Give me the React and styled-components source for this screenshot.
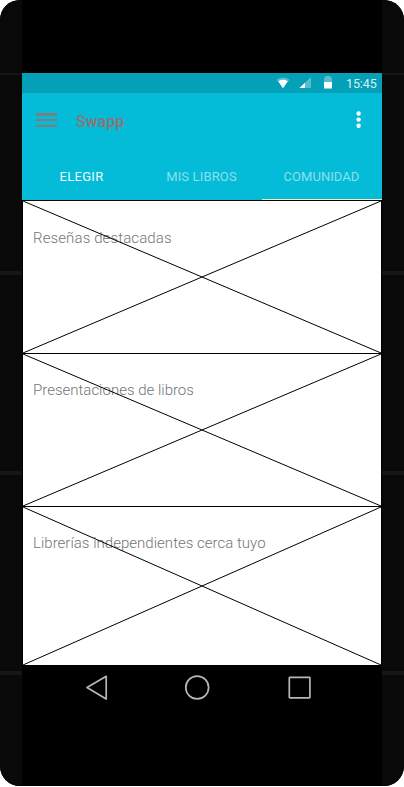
import React from "react";
import styled, { createGlobalStyle } from "styled-components";

const GlobalStyle = createGlobalStyle`
  * { box-sizing: border-box; }
  body { margin: 0; background: #fff; font-family: Roboto, sans-serif; overflow: hidden; }
`;

const Device = styled.div`
  display: grid;
  grid-template-columns: 22px 360px 22px;
  width: 404px;
  height: 786px;
  background: #000;
  border-radius: 20px;
  overflow: hidden;
`;

const Rail = styled.div`
  display: grid;
  grid-template-rows: 73px 2px 196px 4px 196px 4px 196px 4px 1fr;
  background: #090909;
`;

const Seam = styled.div`
  grid-row: ${(p) => p.$row};
  background: #161616;
`;

const Screen = styled.main`
  display: flex;
  flex-direction: column;
  padding-top: 73px;
  min-width: 0;
`;

const StatusBar = styled.div`
  display: flex;
  align-items: center;
  height: 20px;
  padding-left: 255px;
  background: #03a0b7;
`;

const StatusIcons = styled.svg`
  display: block;
  width: 60px;
  height: 20px;
  flex: none;
`;

const Clock = styled.span`
  margin-left: 9px;
  font-size: 12.5px;
  line-height: 20px;
  padding-top: 2px;
  letter-spacing: -0.1px;
  color: #d9f1f5;
`;

const Header = styled.header`
  height: 107px;
  background: #04bcd8;
`;

const Toolbar = styled.div`
  display: flex;
  align-items: center;
  height: 55px;
  padding: 0 20px 0 14px;
`;

const IconButton = styled.button`
  display: block;
  padding: 0;
  border: 0;
  background: none;
  svg { display: block; }
`;

const Title = styled.h1`
  flex: 1;
  margin: 2px 0 0 19px;
  font-size: 16px;
  font-weight: 700;
  line-height: 20px;
  color: #84797b;
`;

const Tabs = styled.nav`
  display: grid;
  grid-template-columns: repeat(3, 120px);
  height: 52px;
`;

const Tab = styled.button`
  padding: 6px 1px 0 0;
  border: 0;
  border-bottom: 1px solid ${(p) => (p.$underlined ? "#e9f5c0" : "transparent")};
  background: none;
  font: 400 13px/20px Roboto, sans-serif;
  letter-spacing: ${(p) => p.$tracking || "0"};
  text-align: center;
  color: ${(p) => (p.$bright ? "#effbfd" : "#8edfeb")};
`;

const Panel = styled.section`
  display: grid;
  height: ${(p) => p.$height}px;
  background: #fff;
  border: 1px solid #000;
  border-bottom: 0;
`;

const Cross = styled.svg`
  grid-area: 1 / 1;
  display: block;
  width: 358px;
  height: 100%;
  overflow: visible;
`;

const PanelTitle = styled.h2`
  grid-area: 1 / 1;
  margin: ${(p) => p.$top}px 0 0 10px;
  font-size: 15px;
  font-weight: 300;
  line-height: 20px;
  letter-spacing: ${(p) => p.$tracking || "0"};
  color: #757575;
`;

const NavBar = styled.footer`
  svg { display: block; }
`;

const SEAM_ROWS = [2, 4, 6, 8];

const PANELS = [
  { title: "Reseñas destacadas", height: 153, top: 27, tracking: "0.12px" },
  { title: "Presentaciones de libros", height: 153, top: 26 },
  { title: "Librerías independientes cerca tuyo", height: 159, top: 26, tracking: "0.02px" },
];

function SideRail() {
  return <Rail>{SEAM_ROWS.map((row) => <Seam key={row} $row={row} />)}</Rail>;
}

function PlaceholderPanel({ title, height, top, tracking }) {
  return (
    <Panel $height={height}>
      <PanelTitle $top={top} $tracking={tracking}>{title}</PanelTitle>
      <Cross viewBox={`0 0 358 ${height - 1}`} preserveAspectRatio="none">
        <path d={`M0 0L358 ${height - 1}M358 0L0 ${height - 1}`} stroke="#000" strokeWidth="1" fill="none" />
      </Cross>
    </Panel>
  );
}

export default function App() {
  return (
    <>
      <GlobalStyle />
      <Device>
        <SideRail />
        <Screen>
          <StatusBar>
            <StatusIcons viewBox="277 73 60 20">
              <path d="M276.6 79.6Q283 75.4 289.4 79.6L283 88.3Z" fill="#55bfce" />
              <path d="M278.3 81.2Q283 78.4 287.7 81.2L283 88.3Z" fill="#fff" />
              <path d="M311 77V88H299.5Z" fill="#55bfce" />
              <path d="M305 82.7V88H299.5Z" fill="#fff" />
              <path d="M324 78.3Q324 77.3 325.2 77.3V76H330.3V77.3Q332 77.3 332 78.3V83H324Z" fill="#55bfce" />
              <path d="M324 82H332V88.4H324Z" fill="#fff" />
            </StatusIcons>
            <Clock>15:45</Clock>
          </StatusBar>
          <Header>
            <Toolbar>
              <IconButton aria-label="Menú">
                <svg width="21" height="15" viewBox="0 0 21 15">
                  <path d="M0 0H21V2.7H0ZM0 6H21V8H0ZM0 12H21V14H0Z" fill="#84797b" />
                </svg>
              </IconButton>
              <Title>Swapp</Title>
              <IconButton aria-label="Más opciones">
                <svg width="6" height="20" viewBox="0 0 6 20">
                  <g fill="#fff">
                    <circle cx="2.6" cy="2.5" r="2.2" />
                    <circle cx="2.6" cy="8.6" r="2.2" />
                    <circle cx="2.6" cy="14.7" r="2.2" />
                  </g>
                </svg>
              </IconButton>
            </Toolbar>
            <Tabs>
              <Tab $bright $tracking="0.3px">ELEGIR</Tab>
              <Tab $tracking="0.15px">MIS LIBROS</Tab>
              <Tab $underlined $tracking="0.06px">COMUNIDAD</Tab>
            </Tabs>
          </Header>
          {PANELS.map((panel) => <PlaceholderPanel key={panel.title} {...panel} />)}
          <NavBar>
            <svg width="360" height="45" viewBox="22 665 360 45" fill="none" stroke="#b7b7b7" strokeWidth="1.7" strokeLinejoin="round">
              <path d="M87 687.6L106.2 676.3V698.9Z" />
              <circle cx="197.2" cy="687.5" r="11.4" />
              <rect x="289.3" y="677.3" width="20.6" height="20.6" rx="0.6" />
            </svg>
          </NavBar>
        </Screen>
        <SideRail />
      </Device>
    </>
  );
}
